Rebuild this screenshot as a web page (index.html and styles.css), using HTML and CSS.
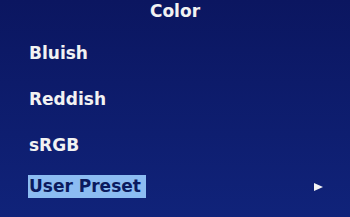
FILE: index.html
```html
<!DOCTYPE html>
<html lang="en">
<head>
   <meta charset="UTF-8">
   <title>Color</title>
   <link rel="stylesheet" href="styles.css">
</head>
<body>
   <div class="osd">
      <h1 class="osd__title">Color</h1>
      <ul class="osd__list">
         <li class="osd__item">Bluish</li>
         <li class="osd__item">Reddish</li>
         <li class="osd__item">sRGB</li>
         <li class="osd__item osd__item--active">
            <span class="osd__label">User Preset</span>
            <span class="osd__arrow"></span>
         </li>
      </ul>
   </div>
</body>
</html>
```

FILE: styles.css
```css
*,
*::before,
*::after {
   box-sizing: border-box;
}

html,
body {
   margin: 0;
   padding: 0;
   height: 100%;
}

body {
   background: linear-gradient(180deg, #0b1660 0%, #10237a 100%);
   font-family: "DejaVu Sans", Verdana, sans-serif;
   font-weight: bold;
   color: #f2f2f2;
}

.osd {
   width: 350px;
   height: 217px;
   overflow: hidden;
}

.osd__title {
   margin: 0;
   padding-top: 1px;
   font-size: 17px;
   line-height: 20px;
   text-align: center;
}

.osd__list {
   list-style: none;
   margin: 0;
   padding: 22px 0 0 29px;
   display: flex;
   flex-direction: column;
   gap: 26px;
}

.osd__item {
   display: flex;
   align-items: center;
   font-size: 17px;
   line-height: 20px;
}

.osd__item--active {
   margin-top: -6px;
   margin-left: -1px;
   padding-right: 27px;
   justify-content: space-between;
}

.osd__label {
   background-color: #8cbcf2;
   color: #0b1a5e;
   padding: 1px 5px 1px 1px;
   line-height: 21px;
}

.osd__arrow {
   width: 0;
   height: 0;
   border-top: 4.5px solid transparent;
   border-bottom: 4.5px solid transparent;
   border-left: 9px solid #f4f4f4;
}
```
